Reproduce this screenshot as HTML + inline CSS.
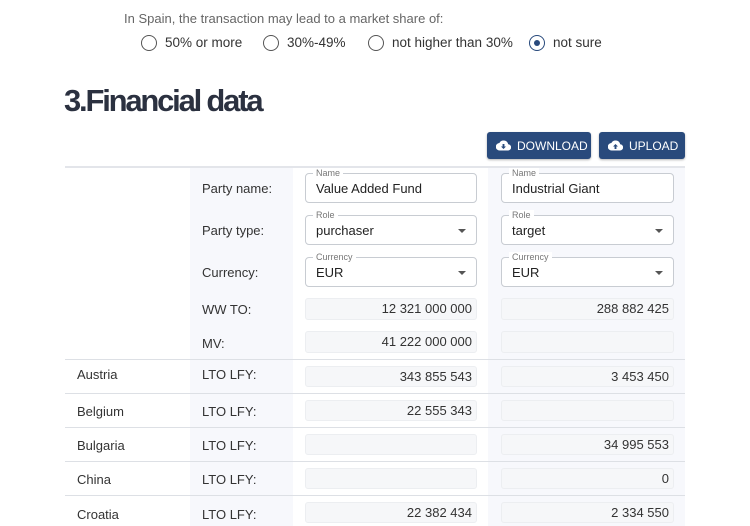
<!DOCTYPE html>
<html><head><meta charset="utf-8"><style>
*{box-sizing:border-box;margin:0;padding:0}
body{width:750px;height:526px;overflow:hidden;background:#fff;font-family:"Liberation Sans",sans-serif;position:relative;color:#333}
.a{position:absolute}
.t{font-size:13.5px;white-space:nowrap;color:#333}
.radio{width:16px;height:16px;border:1.5px solid #555;border-radius:50%}
.radio.on{border-color:#294a7c}
.radio.on::after{content:"";position:absolute;left:3.5px;top:3.5px;width:6px;height:6px;border-radius:50%;background:#294a7c}
.btn{background:#294a7c;color:#fff;border-radius:3px;font-size:12px;letter-spacing:0;display:flex;align-items:center;gap:6px;padding-left:9px;box-shadow:0 1px 2px rgba(0,0,0,.3);white-space:nowrap}
.inp{border:1px solid #c8ccd2;border-radius:4px;background:#fff}
.inp .lab{position:absolute;left:7px;top:-6px;font-size:9px;color:#777;background:#fff;padding:0 3px;line-height:10px}
.inp .v{position:absolute;left:10px;top:7px;font-size:13px;color:#222}
.inp .arr{position:absolute;right:10px;top:13px;border-left:4px solid transparent;border-right:4px solid transparent;border-top:4px solid #555}
.ro{border:1px solid #eceef1;border-radius:3px;background:#f6f7f9;font-size:13px;color:#333;text-align:right;padding-right:4px;line-height:20px}
.hl{height:1px;background:#dde0e5;left:65px;width:620px}
.lbl{font-size:13px;color:#333}
</style></head><body>
<div class="a t" style="left:124px;top:11px;color:#666;font-size:13px">In Spain, the transaction may lead to a market share of:</div>
<div class="a radio" style="left:141px;top:35px"></div><div class="a t" style="left:165px;top:35px">50% or more</div>
<div class="a radio" style="left:263px;top:35px"></div><div class="a t" style="left:287px;top:35px">30%-49%</div>
<div class="a radio" style="left:368px;top:35px"></div><div class="a t" style="left:392px;top:35px">not higher than 30%</div>
<div class="a radio on" style="left:529px;top:35px"></div><div class="a t" style="left:553px;top:35px">not sure</div>
<div class="a" style="left:64px;top:83px;font-size:31px;font-weight:bold;letter-spacing:-2.2px;color:#2b3140">3.Financial data</div>
<div class="a btn" style="left:487px;top:132px;width:104px;height:27px"><svg width="15" height="11" viewBox="0 0 24 17"><path d="M19.4 6.5A7.5 7.5 0 0 0 5.4 4.5 6 6 0 0 0 6 16.5h13a5 5 0 0 0 .4-10z" fill="#fff"/><path d="M10.5 6h3v4h2.5l-4 4-4-4h2.5z" fill="#294a7c"/></svg>DOWNLOAD</div>
<div class="a btn" style="left:599px;top:132px;width:86px;height:27px"><svg width="15" height="11" viewBox="0 0 24 17"><path d="M19.4 6.5A7.5 7.5 0 0 0 5.4 4.5 6 6 0 0 0 6 16.5h13a5 5 0 0 0 .4-10z" fill="#fff"/><path d="M10.5 14h3v-4h2.5l-4-4-4 4h2.5z" fill="#294a7c"/></svg>UPLOAD</div>
<div class="a" style="left:190px;top:167px;width:103px;height:359px;background:#f7f8fc"></div>
<div class="a" style="left:488px;top:167px;width:197px;height:359px;background:#f7f8fc"></div>
<div class="a hl" style="top:166px;height:2px;background:#e3e5ea"></div>
<div class="a lbl" style="left:202px;top:181px">Party name:</div>
<div class="a inp" style="left:305px;top:173px;width:172px;height:30px"><span class="lab">Name</span><span class="v">Value Added Fund</span></div>
<div class="a inp" style="left:501px;top:173px;width:173px;height:30px"><span class="lab">Name</span><span class="v">Industrial Giant</span></div>
<div class="a lbl" style="left:202px;top:223px">Party type:</div>
<div class="a inp" style="left:305px;top:215px;width:172px;height:30px"><span class="lab">Role</span><span class="v">purchaser</span><span class="arr"></span></div>
<div class="a inp" style="left:501px;top:215px;width:173px;height:30px"><span class="lab">Role</span><span class="v">target</span><span class="arr"></span></div>
<div class="a lbl" style="left:202px;top:265px">Currency:</div>
<div class="a inp" style="left:305px;top:257px;width:172px;height:30px"><span class="lab">Currency</span><span class="v">EUR</span><span class="arr"></span></div>
<div class="a inp" style="left:501px;top:257px;width:173px;height:30px"><span class="lab">Currency</span><span class="v">EUR</span><span class="arr"></span></div>
<div class="a lbl" style="left:202px;top:302px">WW TO:</div>
<div class="a ro" style="left:305px;top:298px;width:172px;height:22px">12 321 000 000</div>
<div class="a ro" style="left:501px;top:298px;width:173px;height:22px">288 882 425</div>
<div class="a lbl" style="left:202px;top:336px">MV:</div>
<div class="a ro" style="left:305px;top:331px;width:172px;height:22px">41 222 000 000</div>
<div class="a ro" style="left:501px;top:331px;width:173px;height:22px"></div>

<div class="a hl" style="top:359px"></div>
<div class="a lbl" style="left:77px;top:367px">Austria</div><div class="a lbl" style="left:202px;top:367px">LTO LFY:</div>
<div class="a ro" style="left:305px;top:366px;width:172px;height:21px">343 855 543</div>
<div class="a ro" style="left:501px;top:366px;width:173px;height:21px">3 453 450</div>
<div class="a hl" style="top:393px"></div>
<div class="a lbl" style="left:77px;top:404px">Belgium</div><div class="a lbl" style="left:202px;top:404px">LTO LFY:</div>
<div class="a ro" style="left:305px;top:400px;width:172px;height:21px">22 555 343</div>
<div class="a ro" style="left:501px;top:400px;width:173px;height:21px"></div>
<div class="a hl" style="top:427px"></div>
<div class="a lbl" style="left:77px;top:438px">Bulgaria</div><div class="a lbl" style="left:202px;top:438px">LTO LFY:</div>
<div class="a ro" style="left:305px;top:434px;width:172px;height:21px"></div>
<div class="a ro" style="left:501px;top:434px;width:173px;height:21px">34 995 553</div>
<div class="a hl" style="top:461px"></div>
<div class="a lbl" style="left:77px;top:472px">China</div><div class="a lbl" style="left:202px;top:472px">LTO LFY:</div>
<div class="a ro" style="left:305px;top:468px;width:172px;height:21px"></div>
<div class="a ro" style="left:501px;top:468px;width:173px;height:21px">0</div>
<div class="a hl" style="top:495px"></div>
<div class="a lbl" style="left:77px;top:507px">Croatia</div><div class="a lbl" style="left:202px;top:507px">LTO LFY:</div>
<div class="a ro" style="left:305px;top:502px;width:172px;height:21px">22 382 434</div>
<div class="a ro" style="left:501px;top:502px;width:173px;height:21px">2 334 550</div>
</body></html>
